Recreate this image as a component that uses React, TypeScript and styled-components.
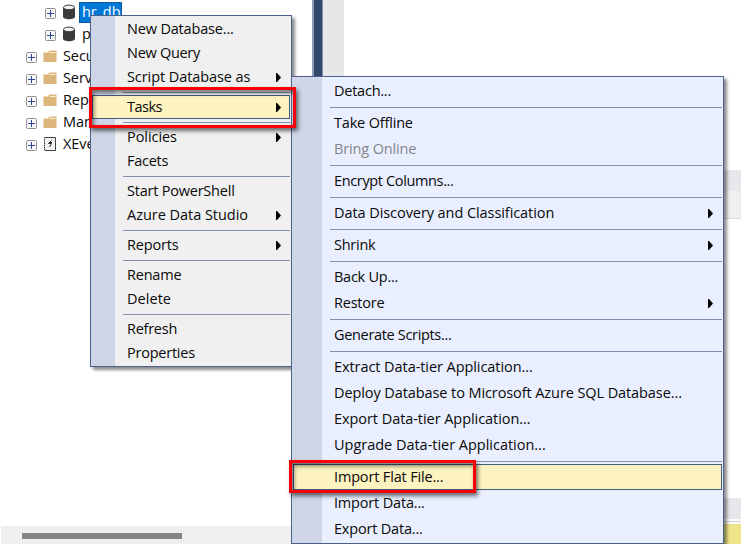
import React from "react";
import styled, { createGlobalStyle, css } from "styled-components";

const GlobalStyle = createGlobalStyle`
  *, *::before, *::after { box-sizing: border-box; }
  body { margin: 0; background: #fff; }
`;

const Workspace = styled.div`
  position: relative;
  display: flex;
  width: 741px;
  height: 544px;
  overflow: hidden;
  background: #fff;
  color: #0a0a0a;
  font: 14.5px "Open Sans", sans-serif;
`;

/* Object explorer */
const Explorer = styled.aside`
  display: flex;
  flex-direction: column;
  width: 312px;
  padding-left: 1px;
`;

const Tree = styled.div`
  flex: 1;
  padding-top: 2px;
`;

const TreeRow = styled.div<{ $depth: number }>`
  display: flex;
  align-items: center;
  height: 22px;
  padding-left: ${(p) => 25 + p.$depth * 19}px;
`;

const Toggle = styled.svg`
  width: 11px;
  height: 11px;
  margin-right: 6px;
  flex: none;
`;

const NodeIcon = styled.svg`
  width: 14px;
  height: 16px;
  margin-bottom: 2px;
  flex: none;
`;

const NodeLabel = styled.span<{ $selected?: boolean }>`
  height: 21px;
  margin: 0 0 1px 3px;
  padding: 0 1px 0 2px;
  border: 1px solid transparent;
  line-height: 18px;
  letter-spacing: -0.1px;
  ${(p) =>
    p.$selected &&
    css`
      color: #fff;
      background: #0078d7;
      border: 1px dotted #f28a1b;
      outline: 1px dotted #1c3c60;
      outline-offset: -1px;
    `}
`;

const HorizontalScroll = styled.div`
  height: 18px;
  padding: 7px 0 0 21px;
  background: #efefef;
`;

const ScrollThumb = styled.div`
  width: 160px;
  height: 6px;
  background: #858585;
`;

/* Editor area */
const Splitter = styled.div`
  width: 11px;
  background: #33476a;
  border-left: 2px solid #8f9bb5;
  border-right: 1px solid #8190ac;
`;

const IndicatorMargin = styled.div`
  width: 21px;
  background: #e6e7e8;
`;

const EditorColumn = styled.main`
  display: flex;
  flex: 1;
  flex-direction: column;
`;

const EditorText = styled.div`
  height: 170px;
`;

const PaneHeader = styled.div`
  height: 21px;
  background: #e6e6eb;
`;

const PaneToolbar = styled.div`
  height: 28px;
  background: #efefef;
  border-bottom: 1px solid #dedede;
`;

const ResultArea = styled.div`
  flex: 1;
`;

const StatusGap = styled.div`
  height: 5px;
  background: #f6f6f8;
  border-top: 2px solid #fafafa;
  border-bottom: 2px solid #fafafa;
  box-shadow: inset 0 1px #d8d8dc;
`;

const StatusBar = styled.div`
  height: 20px;
  background: #efe58b;
`;

/* Menus */
type Theme = "main" | "sub";

const MenuPanel = styled.div<{ $theme: Theme }>`
  position: absolute;
  border: 1px solid #4c628a;
  padding: 1px;
  box-shadow: 3px 3px 3px rgba(0, 0, 0, 0.45);
  ${(p) =>
    p.$theme === "main"
      ? css`
          left: 90px;
          top: 15px;
          width: 202px;
          background: linear-gradient(90deg, #ced5e6 24px, #f0f0f0 24px);
        `
      : css`
          left: 291px;
          top: 76px;
          width: 433px;
          background: linear-gradient(90deg, #ced5e6 30px, #e9efff 30px);
        `}
`;

const MenuItem = styled.div<{ $theme: Theme; $active?: boolean; $disabled?: boolean }>`
  display: flex;
  align-items: center;
  justify-content: space-between;
  height: ${(p) => (p.$theme === "main" ? 24 : 26)}px;
  padding: 0 8px 0 ${(p) => (p.$theme === "main" ? 34 : 40)}px;
  border: 1px solid transparent;
  color: ${(p) => (p.$disabled ? "#848589" : "#0a0a0a")};
  ${(p) =>
    p.$active &&
    css`
      background: #fdf3c0;
      border-color: #455c81;
    `}
`;

const MenuLabel = styled.span<{ $tracking: number }>`
  line-height: 22px;
  white-space: nowrap;
  letter-spacing: ${(p) => p.$tracking - 0.06}px;
`;

const Arrow = styled.svg`
  width: 5px;
  height: 9px;
  margin-top: 1px;
  flex: none;
`;

const Separator = styled.div<{ $theme: Theme }>`
  height: 1px;
  margin: 3px 0 2px ${(p) => (p.$theme === "main" ? 31 : 37)}px;
  background: #8290ae;
`;

const Callout = styled.div<{ $target: "tasks" | "import" }>`
  position: absolute;
  border: 3px solid #fb0007;
  box-shadow: 2px 3px 4px rgba(0, 0, 0, 0.55), inset 2px 3px 4px rgba(0, 0, 0, 0.5);
  ${(p) =>
    p.$target === "tasks"
      ? css`
          left: 89px;
          top: 87px;
          width: 207px;
          height: 41px;
        `
      : css`
          left: 289px;
          top: 460px;
          width: 187px;
          height: 33px;
        `}
`;

type Entry = { label: string; tracking?: number; arrow?: boolean; disabled?: boolean; active?: boolean };

const mainMenu: Entry[][] = [
  [
    { label: "New Database...", tracking: -0.11 },
    { label: "New Query", tracking: -0.23 },
    { label: "Script Database as", tracking: -0.02, arrow: true },
  ],
  [{ label: "Tasks", tracking: -0.45, arrow: true, active: true }],
  [{ label: "Policies", arrow: true }, { label: "Facets", tracking: -0.2 }],
  [
    { label: "Start PowerShell", tracking: -0.16 },
    { label: "Azure Data Studio", tracking: 0.03, arrow: true },
  ],
  [{ label: "Reports", tracking: -0.1, arrow: true }],
  [{ label: "Rename", tracking: -0.15 }, { label: "Delete", tracking: 0.1 }],
  [{ label: "Refresh", tracking: -0.2 }, { label: "Properties", tracking: -0.17 }],
];

const tasksMenu: Entry[][] = [
  [{ label: "Detach...", tracking: -0.18 }],
  [
    { label: "Take Offline", tracking: -0.12 },
    { label: "Bring Online", tracking: -0.08, disabled: true },
  ],
  [{ label: "Encrypt Columns...", tracking: -0.3 }],
  [{ label: "Data Discovery and Classification", tracking: -0.01, arrow: true }],
  [{ label: "Shrink", tracking: -0.2, arrow: true }],
  [
    { label: "Back Up...", tracking: -0.2 },
    { label: "Restore", tracking: -0.15, arrow: true },
  ],
  [{ label: "Generate Scripts...", tracking: -0.27 }],
  [
    { label: "Extract Data-tier Application...", tracking: -0.01 },
    { label: "Deploy Database to Microsoft Azure SQL Database...", tracking: -0.03 },
    { label: "Export Data-tier Application..." },
    { label: "Upgrade Data-tier Application...", tracking: 0.04 },
  ],
  [
    { label: "Import Flat File...", tracking: -0.1, active: true },
    { label: "Import Data...", tracking: -0.12 },
    { label: "Export Data...", tracking: -0.13 },
  ],
];

function Menu({ theme, groups }: { theme: Theme; groups: Entry[][] }) {
  return (
    <MenuPanel $theme={theme} role="menu">
      {groups.map((group, i) => (
        <React.Fragment key={i}>
          {i > 0 && <Separator $theme={theme} />}
          {group.map((e) => (
            <MenuItem key={e.label} role="menuitem" $theme={theme} $active={e.active} $disabled={e.disabled}>
              <MenuLabel $tracking={e.tracking ?? 0}>{e.label}</MenuLabel>
              {e.arrow && (
                <Arrow viewBox="0 0 5 9">
                  <path d="M0 0H1L5 4.5L1 9H0Z" fill="#000" />
                </Arrow>
              )}
            </MenuItem>
          ))}
        </React.Fragment>
      ))}
    </MenuPanel>
  );
}

type NodeKind = "database" | "folder" | "events";

function KindIcon({ kind }: { kind: NodeKind }) {
  if (kind === "database")
    return (
      <NodeIcon viewBox="0 0 14 16">
        <path d="M1 3.5V12.5C1 14.2 3.7 15.3 7 15.3S13 14.2 13 12.5V3.5Z" fill="#3b3b3d" />
        <ellipse cx="7" cy="3.4" rx="5.5" ry="2.3" fill="#f2f2f2" stroke="#3b3b3d" />
      </NodeIcon>
    );
  if (kind === "folder")
    return (
      <NodeIcon viewBox="0 0 14 16">
        <path d="M0.5 4.5H4.8L6.5 2.5H13.5V14H0.5Z" fill="#dcb67a" />
        <path d="M6.5 4.5H12.5" stroke="#fff3da" />
      </NodeIcon>
    );
  return (
    <NodeIcon viewBox="0 0 14 16">
      <path d="M1.5 1.5H12.5V14.5H1.5Z" fill="#f2f2f2" stroke="#424242" />
      <path d="M1 2V15" stroke="#fff" strokeDasharray="1 1" />
      <path d="M8.5 4.5L5.5 7.5H8.5L6.5 11M5.8 6.5H9" fill="none" stroke="#303030" />
    </NodeIcon>
  );
}

const nodes: { label: string; kind: NodeKind; depth: number; selected?: boolean }[] = [
  { label: "hr_db", kind: "database", depth: 1, selected: true },
  { label: "p", kind: "database", depth: 1 },
  { label: "Secu", kind: "folder", depth: 0 },
  { label: "Serv", kind: "folder", depth: 0 },
  { label: "Rep", kind: "folder", depth: 0 },
  { label: "Man", kind: "folder", depth: 0 },
  { label: "XEve", kind: "events", depth: 0 },
];

export default function App() {
  return (
    <>
      <GlobalStyle />
      <Workspace>
        <Explorer>
          <Tree>
            {nodes.map((n) => (
              <TreeRow key={n.label} $depth={n.depth}>
                <Toggle viewBox="0 0 11 11">
                  <rect x="0.5" y="0.5" width="10" height="10" rx="1" fill="#f7f7f7" stroke="#929292" />
                  <path d="M2 5.5H9M5.5 2V9" stroke="#2b4a92" />
                </Toggle>
                <KindIcon kind={n.kind} />
                <NodeLabel $selected={n.selected}>{n.label}</NodeLabel>
              </TreeRow>
            ))}
          </Tree>
          <HorizontalScroll>
            <ScrollThumb />
          </HorizontalScroll>
        </Explorer>
        <Splitter />
        <IndicatorMargin />
        <EditorColumn>
          <EditorText />
          <PaneHeader />
          <PaneToolbar />
          <ResultArea />
          <PaneHeader />
          <StatusGap />
          <StatusBar />
        </EditorColumn>
        <Menu theme="main" groups={mainMenu} />
        <Menu theme="sub" groups={tasksMenu} />
        <Callout $target="tasks" />
        <Callout $target="import" />
      </Workspace>
    </>
  );
}
